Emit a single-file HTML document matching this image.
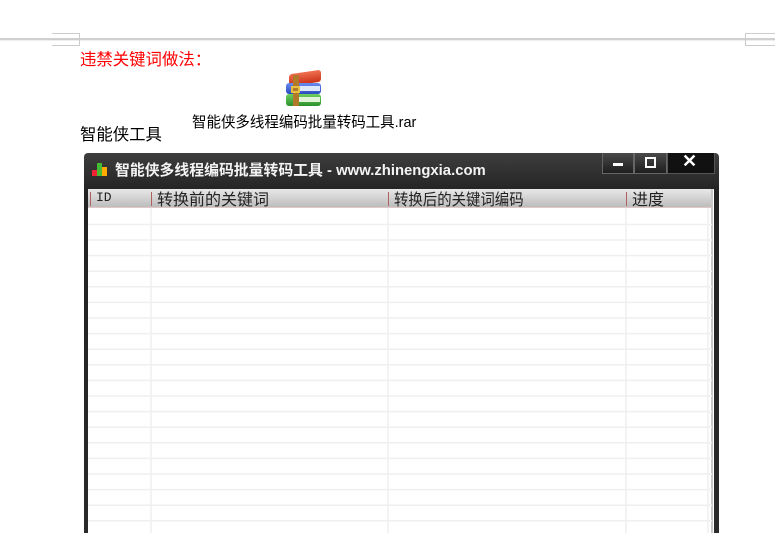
<!DOCTYPE html>
<html style="width:775px;height:533px;overflow:hidden"><head><meta charset="utf-8"><style>
*{margin:0;padding:0;box-sizing:border-box}
body{width:775px;height:533px;overflow:hidden;background:#fff;position:relative;font-family:"Liberation Sans","Noto Sans CJK SC",sans-serif}
.a{position:absolute}
</style></head><body>
<div class="a" style="left:0;top:38px;width:775px;height:2px;background:#d0d0d0"></div>
<div class="a" style="left:0;top:40px;width:775px;height:1px;background:#eee"></div>
<div class="a" style="left:52px;top:33px;width:28px;height:13px;border:1px solid #ccc;border-left:none"></div>
<div class="a" style="left:52px;top:39px;width:28px;height:1px;background:#ccc"></div>
<div class="a" style="left:745px;top:33px;width:30px;height:13px;border:1px solid #ccc;border-right:none"></div>
<div class="a" style="left:80px;top:46px;font-size:16.4px;color:#f00">违禁关键词做法：</div>
<div class="a" style="left:285px;top:72px;width:38px;height:36px">
 <div class="a" style="left:4px;top:0;width:32px;height:12px;background:linear-gradient(#f07050,#c83018);border-radius:3px;transform:skewY(-8deg)"></div>
 <div class="a" style="left:1px;top:11px;width:35px;height:11px;background:linear-gradient(#6a8cf0,#2a4cc0);border-radius:3px"></div>
 <div class="a" style="left:1px;top:22px;width:35px;height:12px;background:linear-gradient(#70d060,#2a902a);border-radius:3px"></div>
 <div class="a" style="left:14px;top:14px;width:21px;height:5px;background:#dde8fa"></div>
 <div class="a" style="left:14px;top:25px;width:21px;height:5px;background:#e0f4d8"></div>
 <div class="a" style="left:8px;top:3px;width:6px;height:31px;background:#b07a2a"></div>
 <div class="a" style="left:6px;top:14px;width:9px;height:7px;border:2px solid #e8c040"></div>
</div>
<div class="a" style="left:192px;top:111px;font-size:15px;color:#000;transform:scaleX(0.965);transform-origin:left">智能侠多线程编码批量转码工具.rar</div>
<div class="a" style="left:80px;top:121px;font-size:16.4px;color:#000">智能侠工具</div>
<div class="a" style="left:84px;top:153px;width:635px;height:390px;background:linear-gradient(#3e3e3e,#222 40px,#2a2a2a);border-radius:4px 4px 0 0"></div>
<div class="a" style="left:92px;top:160px;width:18px;height:16px">
 <div class="a" style="left:0;top:10px;width:5px;height:6px;background:#e23"></div>
 <div class="a" style="left:5px;top:3px;width:5px;height:13px;background:#4b3"></div>
 <div class="a" style="left:10px;top:7px;width:5px;height:9px;background:#fa0"></div>
</div>
<div class="a" style="left:115px;top:159px;font-size:15px;font-weight:bold;color:#f4f4f4;transform:scaleX(0.99);transform-origin:left">智能侠多线程编码批量转码工具 - www.zhinengxia.com</div>
<div class="a" style="left:602px;top:153px;width:32px;height:21px;background:linear-gradient(#4a4a4a,#1e1e1e);border:1px solid #666;border-top:none"></div>
<div class="a" style="left:613px;top:163px;width:10px;height:3px;background:#fff"></div>
<div class="a" style="left:634px;top:153px;width:33px;height:21px;background:linear-gradient(#4a4a4a,#1e1e1e);border:1px solid #666;border-top:none"></div>
<div class="a" style="left:645px;top:157px;width:11px;height:11px;border:2px solid #fff"></div>
<div class="a" style="left:667px;top:153px;width:48px;height:21px;background:#111;border:1px solid #555;border-top:none"></div>
<div class="a" style="left:682px;top:151px;font-size:18px;font-weight:bold;color:#fff">✕</div>
<div class="a" style="left:88px;top:189px;width:626px;height:344px;background:#fff"></div>
<div class="a" style="left:88px;top:189px;width:624px;height:19px;background:linear-gradient(#e8e8e8,#bcbcbc);border-bottom:1px solid #e0c8c8"></div>
<div class="a" style="left:711px;top:189px;width:2px;height:344px;background:#c8c8c8"></div>
<div class="a" style="left:90px;top:192px;width:1px;height:14px;background:#b06060"></div>
<div class="a" style="left:151px;top:192px;width:1px;height:14px;background:#b06060"></div>
<div class="a" style="left:388px;top:192px;width:1px;height:14px;background:#b06060"></div>
<div class="a" style="left:626px;top:192px;width:1px;height:14px;background:#b06060"></div>
<div class="a" style="left:96px;top:190px;font-size:13px;color:#222;font-family:'Liberation Mono',monospace">ID</div>
<div class="a" style="left:157px;top:186px;font-size:16px;color:#222">转换前的关键词</div>
<div class="a" style="left:394px;top:186px;font-size:16px;color:#222;transform:scaleX(0.9);transform-origin:left">转换后的关键词编码</div>
<div class="a" style="left:632px;top:186px;font-size:16px;color:#222">进度</div>
<svg class="a" style="left:88px;top:208px" width="624" height="325">
<g stroke="#efefef" stroke-width="1.5">
<line x1="63" y1="0" x2="63" y2="325"/><line x1="300" y1="0" x2="300" y2="325"/><line x1="538" y1="0" x2="538" y2="325"/><line x1="620" y1="0" x2="620" y2="325"/>
<line x1="0" y1="16.5" x2="624" y2="16.5"/><line x1="0" y1="32" x2="624" y2="32"/><line x1="0" y1="47.6" x2="624" y2="47.6"/><line x1="0" y1="63.2" x2="624" y2="63.2"/><line x1="0" y1="78.8" x2="624" y2="78.8"/><line x1="0" y1="94.4" x2="624" y2="94.4"/><line x1="0" y1="110" x2="624" y2="110"/><line x1="0" y1="125.6" x2="624" y2="125.6"/><line x1="0" y1="141.2" x2="624" y2="141.2"/><line x1="0" y1="156.8" x2="624" y2="156.8"/><line x1="0" y1="172.4" x2="624" y2="172.4"/><line x1="0" y1="188" x2="624" y2="188"/><line x1="0" y1="203.6" x2="624" y2="203.6"/><line x1="0" y1="219.2" x2="624" y2="219.2"/><line x1="0" y1="234.8" x2="624" y2="234.8"/><line x1="0" y1="250.4" x2="624" y2="250.4"/><line x1="0" y1="266" x2="624" y2="266"/><line x1="0" y1="281.6" x2="624" y2="281.6"/><line x1="0" y1="297.2" x2="624" y2="297.2"/><line x1="0" y1="312.8" x2="624" y2="312.8"/>
</g></svg>
</body></html>
